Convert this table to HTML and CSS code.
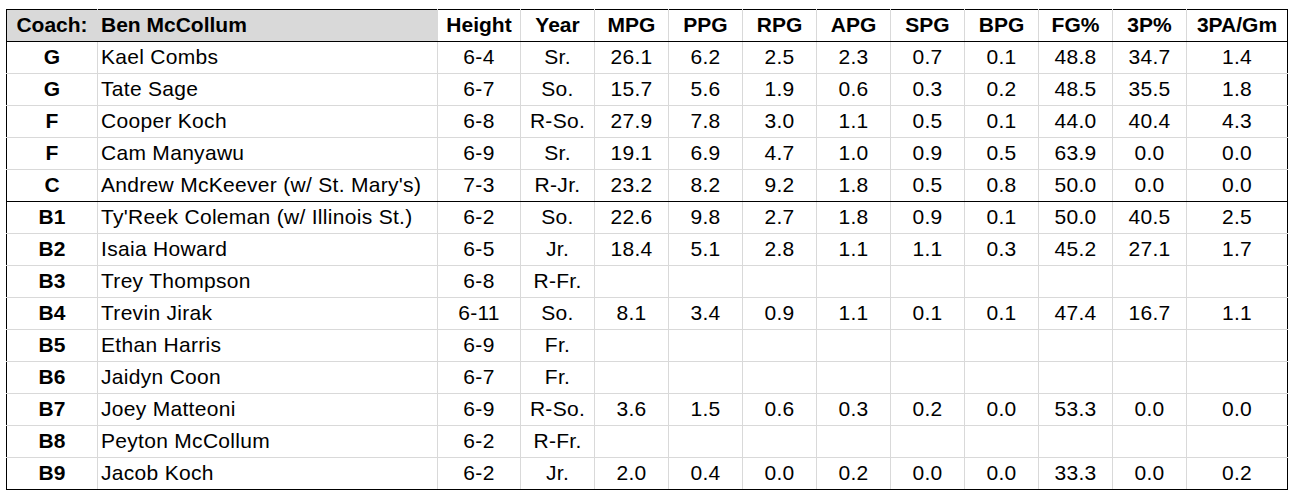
FILE: index.html
```html
<!DOCTYPE html>
<html>
<head>
<meta charset="utf-8">
<link rel="stylesheet" href="styles.css">
</head>
<body>
<table class="roster">
  <colgroup>
    <col class="c-pos"><col class="c-name"><col class="c-ht"><col class="c-stat"><col class="c-stat"><col class="c-stat"><col class="c-stat"><col class="c-stat"><col class="c-stat"><col class="c-stat"><col class="c-stat"><col class="c-stat"><col class="c-last">
  </colgroup>
  <thead>
    <tr>
      <th class="coach">Coach:</th>
      <th class="coach name">Ben McCollum</th>
      <th>Height</th><th>Year</th><th>MPG</th><th>PPG</th><th>RPG</th><th>APG</th><th>SPG</th><th>BPG</th><th>FG%</th><th>3P%</th><th>3PA/Gm</th>
    </tr>
  </thead>
  <tbody>
    <tr><td class="pos">G</td><td class="name">Kael Combs</td><td>6-4</td><td>Sr.</td><td>26.1</td><td>6.2</td><td>2.5</td><td>2.3</td><td>0.7</td><td>0.1</td><td>48.8</td><td>34.7</td><td>1.4</td></tr>
    <tr><td class="pos">G</td><td class="name">Tate Sage</td><td>6-7</td><td>So.</td><td>15.7</td><td>5.6</td><td>1.9</td><td>0.6</td><td>0.3</td><td>0.2</td><td>48.5</td><td>35.5</td><td>1.8</td></tr>
    <tr><td class="pos">F</td><td class="name">Cooper Koch</td><td>6-8</td><td>R-So.</td><td>27.9</td><td>7.8</td><td>3.0</td><td>1.1</td><td>0.5</td><td>0.1</td><td>44.0</td><td>40.4</td><td>4.3</td></tr>
    <tr><td class="pos">F</td><td class="name">Cam Manyawu</td><td>6-9</td><td>Sr.</td><td>19.1</td><td>6.9</td><td>4.7</td><td>1.0</td><td>0.9</td><td>0.5</td><td>63.9</td><td>0.0</td><td>0.0</td></tr>
    <tr class="last-starter"><td class="pos">C</td><td class="name">Andrew McKeever (w/ St. Mary's)</td><td>7-3</td><td>R-Jr.</td><td>23.2</td><td>8.2</td><td>9.2</td><td>1.8</td><td>0.5</td><td>0.8</td><td>50.0</td><td>0.0</td><td>0.0</td></tr>
    <tr><td class="pos">B1</td><td class="name">Ty'Reek Coleman (w/ Illinois St.)</td><td>6-2</td><td>So.</td><td>22.6</td><td>9.8</td><td>2.7</td><td>1.8</td><td>0.9</td><td>0.1</td><td>50.0</td><td>40.5</td><td>2.5</td></tr>
    <tr><td class="pos">B2</td><td class="name">Isaia Howard</td><td>6-5</td><td>Jr.</td><td>18.4</td><td>5.1</td><td>2.8</td><td>1.1</td><td>1.1</td><td>0.3</td><td>45.2</td><td>27.1</td><td>1.7</td></tr>
    <tr><td class="pos">B3</td><td class="name">Trey Thompson</td><td>6-8</td><td>R-Fr.</td><td></td><td></td><td></td><td></td><td></td><td></td><td></td><td></td><td></td></tr>
    <tr><td class="pos">B4</td><td class="name">Trevin Jirak</td><td>6-11</td><td>So.</td><td>8.1</td><td>3.4</td><td>0.9</td><td>1.1</td><td>0.1</td><td>0.1</td><td>47.4</td><td>16.7</td><td>1.1</td></tr>
    <tr><td class="pos">B5</td><td class="name">Ethan Harris</td><td>6-9</td><td>Fr.</td><td></td><td></td><td></td><td></td><td></td><td></td><td></td><td></td><td></td></tr>
    <tr><td class="pos">B6</td><td class="name">Jaidyn Coon</td><td>6-7</td><td>Fr.</td><td></td><td></td><td></td><td></td><td></td><td></td><td></td><td></td><td></td></tr>
    <tr><td class="pos">B7</td><td class="name">Joey Matteoni</td><td>6-9</td><td>R-So.</td><td>3.6</td><td>1.5</td><td>0.6</td><td>0.3</td><td>0.2</td><td>0.0</td><td>53.3</td><td>0.0</td><td>0.0</td></tr>
    <tr><td class="pos">B8</td><td class="name">Peyton McCollum</td><td>6-2</td><td>R-Fr.</td><td></td><td></td><td></td><td></td><td></td><td></td><td></td><td></td><td></td></tr>
    <tr><td class="pos">B9</td><td class="name">Jacob Koch</td><td>6-2</td><td>Jr.</td><td>2.0</td><td>0.4</td><td>0.0</td><td>0.2</td><td>0.0</td><td>0.0</td><td>33.3</td><td>0.0</td><td>0.2</td></tr>
  </tbody>
</table>
</body>
</html>
```
FILE: styles.css
```css
html, body {
  margin: 0;
  padding: 0;
  background: #ffffff;
}
body {
  padding: 9px 0 0 6px;
  font-family: "Liberation Sans", Arial, sans-serif;
  font-size: 21px;
  color: #000000;
}
.roster {
  border-collapse: collapse;
  table-layout: fixed;
  width: 1282px;
  border: 1px solid #000000;
}
.c-pos { width: 91px; }
.c-name { width: 340px; }
.c-ht { width: 83px; }
.c-stat { width: 74px; }
.c-last { width: 101px; }
.roster th,
.roster td {
  border: 1px solid #d9d9d9;
  padding: 0 0 2px 0;
  height: 29px;
  text-align: center;
  vertical-align: middle;
  white-space: nowrap;
  overflow: hidden;
  line-height: 24px;
}
.roster td {
  letter-spacing: 0.3px;
}
.roster th {
  font-weight: bold;
  border-bottom: 1px solid #000000;
  border-top: 1px solid #000000;
}
.roster th.coach {
  background: #d9d9d9;
}
.roster th:first-child,
.roster td:first-child {
  border-left: 1px solid #000000;
}
.roster th:last-child,
.roster td:last-child {
  border-right: 1px solid #000000;
}
.roster tbody tr:last-child td {
  border-bottom: 1px solid #000000;
}
.roster .name {
  text-align: left;
  padding-left: 3px;
}
.roster td.pos {
  font-weight: bold;
  letter-spacing: 0;
}
.roster tr.last-starter td {
  border-bottom: 1px solid #000000;
}
```
